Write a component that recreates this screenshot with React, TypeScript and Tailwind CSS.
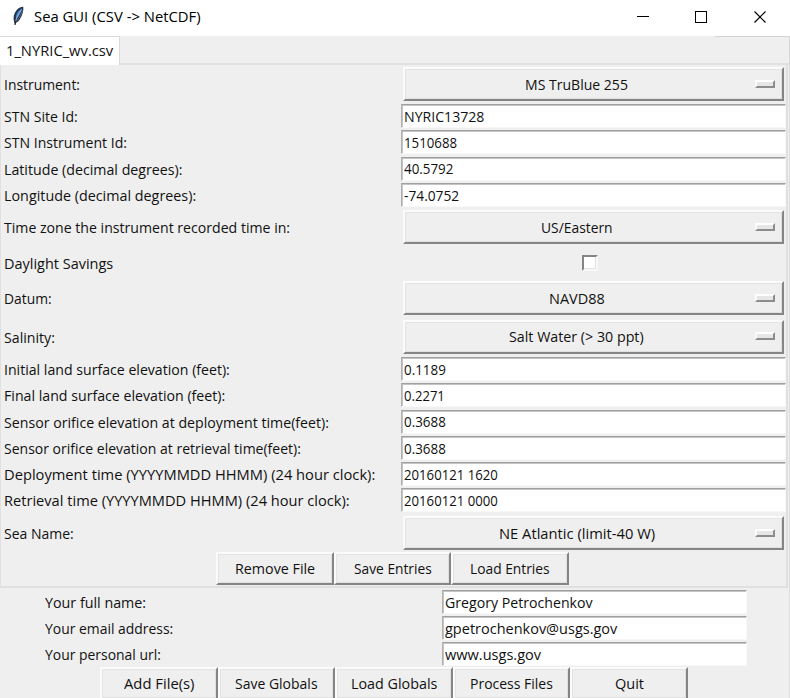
import { useLayoutEffect, useRef, useState } from "react";

type TextProps = { text: string; width: number; title?: boolean };

// Text condensed horizontally to an exact advance width.
function Text({ text, width, title }: TextProps) {
  const ref = useRef<HTMLSpanElement>(null);
  const [scale, setScale] = useState(1);
  useLayoutEffect(() => {
    if (ref.current) setScale(width / ref.current.offsetWidth);
  }, [text, width]);
  return (
    <span className="block shrink-0 whitespace-pre text-left" style={{ width }}>
      <span
        ref={ref}
        className={
          title
            ? "inline-block origin-left text-[15px] leading-5 text-black"
            : "inline-block origin-left text-[15px] leading-5 text-[#111]"
        }
        style={{ transform: `scaleX(${scale})` }}
      >
        {text}
      </span>
    </span>
  );
}

const raised =
  "border-t-2 border-l-2 border-r-2 border-b-2 border-t-[#fbfbfb] border-l-[#fbfbfb] border-r-[#858585] border-b-[#858585] bg-[#efefef] shadow-[inset_1px_1px_0_#e3e3e3,inset_-1px_-1px_0_#e0e0e0]";

function Option({ text, width }: { text: string; width: number }) {
  return (
    <button className={`ml-[2px] flex h-[34px] w-[381px] items-center ${raised}`}>
      <span className="flex flex-1 justify-center pr-[7px] pb-px">
        <Text text={text} width={width} />
      </span>
      <span className="mr-[7px] mb-px h-[8px] w-[20px] border-t-2 border-r-2 border-b-2 border-l-2 border-t-white border-r-[#8c8c8c] border-b-[#8c8c8c] border-l-[#fafafa] bg-[#e6e6e6]" />
    </button>
  );
}

function Entry({ text, width }: { text: string; width: number }) {
  return (
    <div className="flex h-[24px] w-full items-center border-t border-r border-b border-l border-t-[#a0a0a0] border-r-[#f8f8f8] border-b-[#f8f8f8] border-l-[#b0b0b0] bg-white pb-px pl-[2px] shadow-[inset_1px_1px_0_#c4c4c4]">
      <Text text={text} width={width} />
    </div>
  );
}

function Push({ text, width, w }: { text: string; width: number; w: string }) {
  return (
    <button className={`flex h-[33px] shrink-0 items-center justify-center pb-px ${w} ${raised}`}>
      <Text text={text} width={width} />
    </button>
  );
}

type Row = {
  label: string;
  lw: number;
  kind: "option" | "entry" | "check";
  value: string;
  vw: number;
  h: string;
};

const rows: Row[] = [
  { label: "Instrument:", lw: 76, kind: "option", value: "MS TruBlue 255", vw: 103, h: "h-[38px]" },
  { label: "STN Site Id:", lw: 74, kind: "entry", value: "NYRIC13728", vw: 80, h: "h-[26px]" },
  { label: "STN Instrument Id:", lw: 123, kind: "entry", value: "1510688", vw: 53, h: "h-[26px]" },
  { label: "Latitude (decimal degrees):", lw: 178, kind: "entry", value: "40.5792", vw: 49, h: "h-[27px]" },
  { label: "Longitude (decimal degrees):", lw: 192, kind: "entry", value: "-74.0752", vw: 55, h: "h-[26px]" },
  { label: "Time zone the instrument recorded time in:", lw: 286, kind: "option", value: "US/Eastern", vw: 72, h: "h-[38px]" },
  { label: "Daylight Savings", lw: 109, kind: "check", value: "", vw: 0, h: "h-[33px]" },
  { label: "Datum:", lw: 48, kind: "option", value: "NAVD88", vw: 56, h: "h-[38px]" },
  { label: "Salinity:", lw: 51, kind: "option", value: "Salt Water (> 30 ppt)", vw: 135, h: "h-[39px]" },
  { label: "Initial land surface elevation (feet):", lw: 226, kind: "entry", value: "0.1189", vw: 42, h: "h-[26px]" },
  { label: "Final land surface elevation (feet):", lw: 221, kind: "entry", value: "0.2271", vw: 41, h: "h-[26px]" },
  { label: "Sensor orifice elevation at deployment time(feet):", lw: 325, kind: "entry", value: "0.3688", vw: 42, h: "h-[27px]" },
  { label: "Sensor orifice elevation at retrieval time(feet):", lw: 297, kind: "entry", value: "0.3688", vw: 42, h: "h-[26px]" },
  { label: "Deployment time (YYYYMMDD HHMM) (24 hour clock):", lw: 371, kind: "entry", value: "20160121 1620", vw: 94, h: "h-[26px]" },
  { label: "Retrieval time (YYYYMMDD HHMM) (24 hour clock):", lw: 346, kind: "entry", value: "20160121 0000", vw: 94, h: "h-[26px]" },
  { label: "Sea Name:", lw: 70, kind: "option", value: "NE Atlantic (limit-40 W)", vw: 156, h: "h-[39px] pt-px" },
];

const globals = [
  { label: "Your full name:", lw: 101, value: "Gregory Petrochenkov", vw: 148, h: "h-[26px]" },
  { label: "Your email address:", lw: 128, value: "gpetrochenkov@usgs.gov", vw: 172, h: "h-[26px]" },
  { label: "Your personal url:", lw: 116, value: "www.usgs.gov", vw: 96, h: "h-[26px]" },
];

function Feather() {
  return (
    <svg width="14" height="20" viewBox="0 0 14 20" className="shrink-0">
      <path d="M3 18.6 C1 14 1 9 4 5 C6 2 9 .7 11.3 .8 C11.8 5 10.5 9 8.3 12.5 C7 15 5 16.5 4 16.8Z" fill="#26384f" />
      <path d="M4 13 C3.5 9 5.5 4.5 10 2.4 C9.5 6 7.5 10 4 13Z" fill="#3f7bc4" />
      <path d="M5.3 14.3 C7.5 11.5 9.8 8 10.5 4.3" stroke="#5c6672" strokeWidth="1" fill="none" />
      <path d="M3 19 C3.5 14 5.5 8.5 9.5 3.5" stroke="#b3cdec" strokeWidth=".8" fill="none" />
      <path d="M3 19 L3.8 14.8" stroke="#222" strokeWidth="1.2" />
    </svg>
  );
}

export default function App() {
  return (
    <div className="h-[698px] w-[790px] overflow-hidden bg-[#efefef] font-['Open_Sans','Noto_Sans',sans-serif]">
      <header className="flex h-[36px] items-center bg-white pb-[5px] pl-[12px]">
        <Feather />
        <div className="ml-[8px]">
          <Text text="Sea GUI (CSV -> NetCDF)" width={167} title />
        </div>
        <svg className="mt-[5px] ml-auto" width="154" height="34" viewBox="0 0 154 34" fill="none" stroke="#000" shapeRendering="crispEdges">
          <path d="M1 15.5H13M59.5 10.5H70.5V21.5H59.5Z" />
          <path d="M118.5 10.5L129.5 21.5M129.5 10.5L118.5 21.5" shapeRendering="auto" strokeWidth="1.2" />
        </svg>
      </header>

      <div className="flex h-[29px]">
        <div className="flex w-[120px] items-center border-t border-r border-[#d9d9d9] bg-white pb-[2px] pl-[6px]">
          <Text text="1_NYRIC_wv.csv" width={107} />
        </div>
        <div className="flex flex-1 flex-col items-end border-r border-b-2 border-r-[#d9d9d9] border-b-[#e0e0e0]">
          <div className="h-px w-[74px] bg-[#d3d3d3]" />
        </div>
      </div>

      <div className="h-[633px] border-r border-[#dcdcdc]">
        <section className="h-[523px] w-[788px] border-r-2 border-b-2 border-l border-[#e0e0e0]">
          {rows.map((r) => (
            <div key={r.label} className={`flex items-center pl-[3px] ${r.h}`}>
              <div className="w-[397px] shrink-0">
                <Text text={r.label} width={r.lw} />
              </div>
              <div className="flex w-[385px] shrink-0">
                {r.kind === "option" && <Option text={r.value} width={r.vw} />}
                {r.kind === "entry" && <Entry text={r.value} width={r.vw} />}
                {r.kind === "check" && (
                  <span className="ml-[181px] h-[16px] w-[16px] border-t-2 border-r-2 border-b-2 border-l-2 border-t-[#858585] border-r-[#f8f8f8] border-b-[#f8f8f8] border-l-[#858585] bg-white shadow-[inset_-1px_-1px_0_#e3e3e3]" />
                )}
              </div>
            </div>
          ))}
          <div className="flex pl-[215px]">
            <Push text="Remove File" width={80} w="w-[118px]" />
            <Push text="Save Entries" width={78} w="w-[117px]" />
            <Push text="Load Entries" width={80} w="w-[118px]" />
          </div>
        </section>

        <section className="pt-px">
          {globals.map((g) => (
            <div key={g.label} className={`flex items-center pl-[45px] ${g.h}`}>
              <div className="w-[397px] shrink-0 pb-px">
                <Text text={g.label} width={g.lw} />
              </div>
              <div className="w-[305px]">
                <Entry text={g.value} width={g.vw} />
              </div>
            </div>
          ))}
          <div className="flex pl-[100px]">
            <Push text="Add File(s)" width={70} w="w-[118px]" />
            <Push text="Save Globals" width={83} w="w-[117px]" />
            <Push text="Load Globals" width={86} w="w-[118px]" />
            <Push text="Process Files" width={83} w="w-[117px]" />
            <Push text="Quit" width={29} w="w-[118px]" />
          </div>
        </section>
      </div>
    </div>
  );
}
